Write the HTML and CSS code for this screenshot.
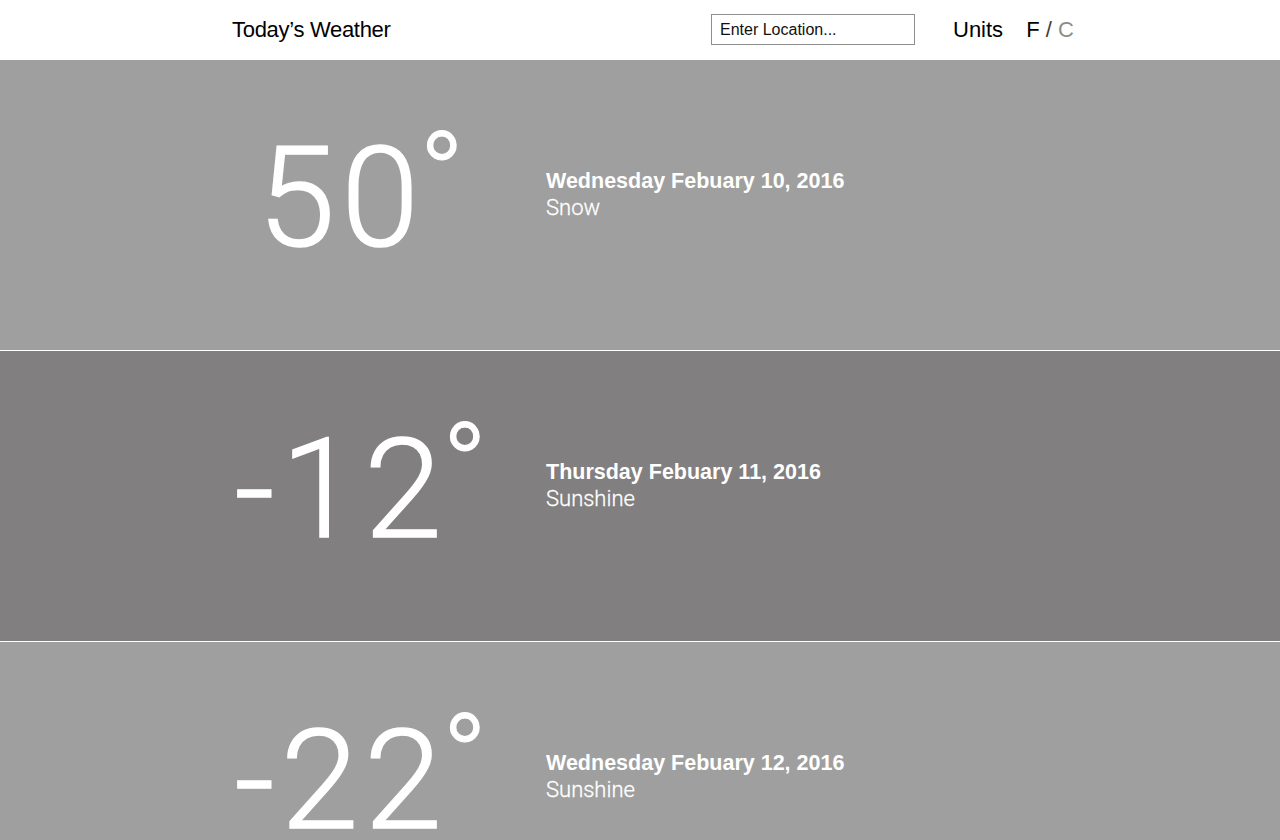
FILE: index.html
```html
<!DOCTYPE html>
<html lang="en">
<head>
<meta charset="utf-8">
<title>Today's Weather</title>
<link rel="stylesheet" href="styles.css">
</head>
<body>
<header class="header">
  <h1 class="title">Today’s Weather</h1>
  <input class="location" type="text" placeholder="Enter Location...">
  <span class="units-label">Units</span>
  <span class="units-toggle"><span class="unit-f">F</span> <span class="unit-sep">/</span> <span class="unit-c">C</span></span>
</header>
<main class="days">
  <section class="day day-light">
    <div class="temp">50<span class="deg">°</span></div>
    <div class="info">
      <div class="date">Wednesday Febuary 10, 2016</div>
      <div class="cond">Snow</div>
    </div>
  </section>
  <section class="day day-dark">
    <div class="temp">-12<span class="deg">°</span></div>
    <div class="info">
      <div class="date">Thursday Febuary 11, 2016</div>
      <div class="cond">Sunshine</div>
    </div>
  </section>
  <section class="day day-light">
    <div class="temp">-22<span class="deg">°</span></div>
    <div class="info">
      <div class="date">Wednesday Febuary 12, 2016</div>
      <div class="cond">Sunshine</div>
    </div>
  </section>
</main>
</body>
</html>
```
FILE: styles.css
```css
html, body {
  margin: 0;
  padding: 0;
  background: #ffffff;
  font-family: "Liberation Sans", Arial, sans-serif;
  overflow: hidden;
}

.header {
  height: 60px;
  display: flex;
  align-items: center;
  padding-left: 232px;
  box-sizing: border-box;
  background: #fff;
  color: #000;
}

.title {
  margin: 0;
  width: 479px;
  font-size: 22px;
  font-weight: 400;
  letter-spacing: -0.3px;
}

.location {
  width: 204px;
  height: 31px;
  box-sizing: border-box;
  border: 1px solid #8e8e8e;
  padding: 0 8px;
  font-family: "Liberation Sans", Arial, sans-serif;
  font-size: 16px;
  color: #000;
  outline: none;
  margin: 0 0 1px 0;
}

.location::placeholder {
  color: #111;
  opacity: 1;
}

.units-label {
  margin-left: 38px;
  font-size: 22px;
}

.units-toggle {
  margin-left: 23px;
  font-size: 22px;
}

.unit-f { color: #000; }
.unit-sep { color: #3c3c3c; }
.unit-c { color: #8c8c8c; }

.days {
  display: flex;
  flex-direction: column;
}

.day {
  height: 290px;
  display: flex;
  align-items: flex-start;
  padding-left: 232px;
  color: #fff;
  border-bottom: 1px solid #fff;
  box-sizing: content-box;
}

.day-light { background: #9f9f9f; }
.day-dark { background: #817f7f; }

.temp {
  width: 258px;
  text-align: center;
  font-family: Roboto, "Liberation Sans", sans-serif;
  font-weight: 300;
  font-size: 140px;
  line-height: 150px;
  margin-top: 63px;
  letter-spacing: 6px;
  white-space: nowrap;
  -webkit-text-stroke: 1.6px #fff;
}

.deg {
  font-size: 0.86em;
  line-height: 0;
  vertical-align: 28px;
  letter-spacing: 0;
  margin-left: -6px;
  -webkit-text-stroke: 1.2px #fff;
}

.info {
  margin-left: 56px;
  margin-top: 108px;
}

.date {
  font-size: 21.5px;
  font-weight: 700;
  line-height: 26px;
}

.cond {
  font-family: Roboto, "Liberation Sans", sans-serif;
  font-weight: 300;
  font-size: 22px;
  line-height: 27px;
  -webkit-text-stroke: 0.3px #fff;
}
```
